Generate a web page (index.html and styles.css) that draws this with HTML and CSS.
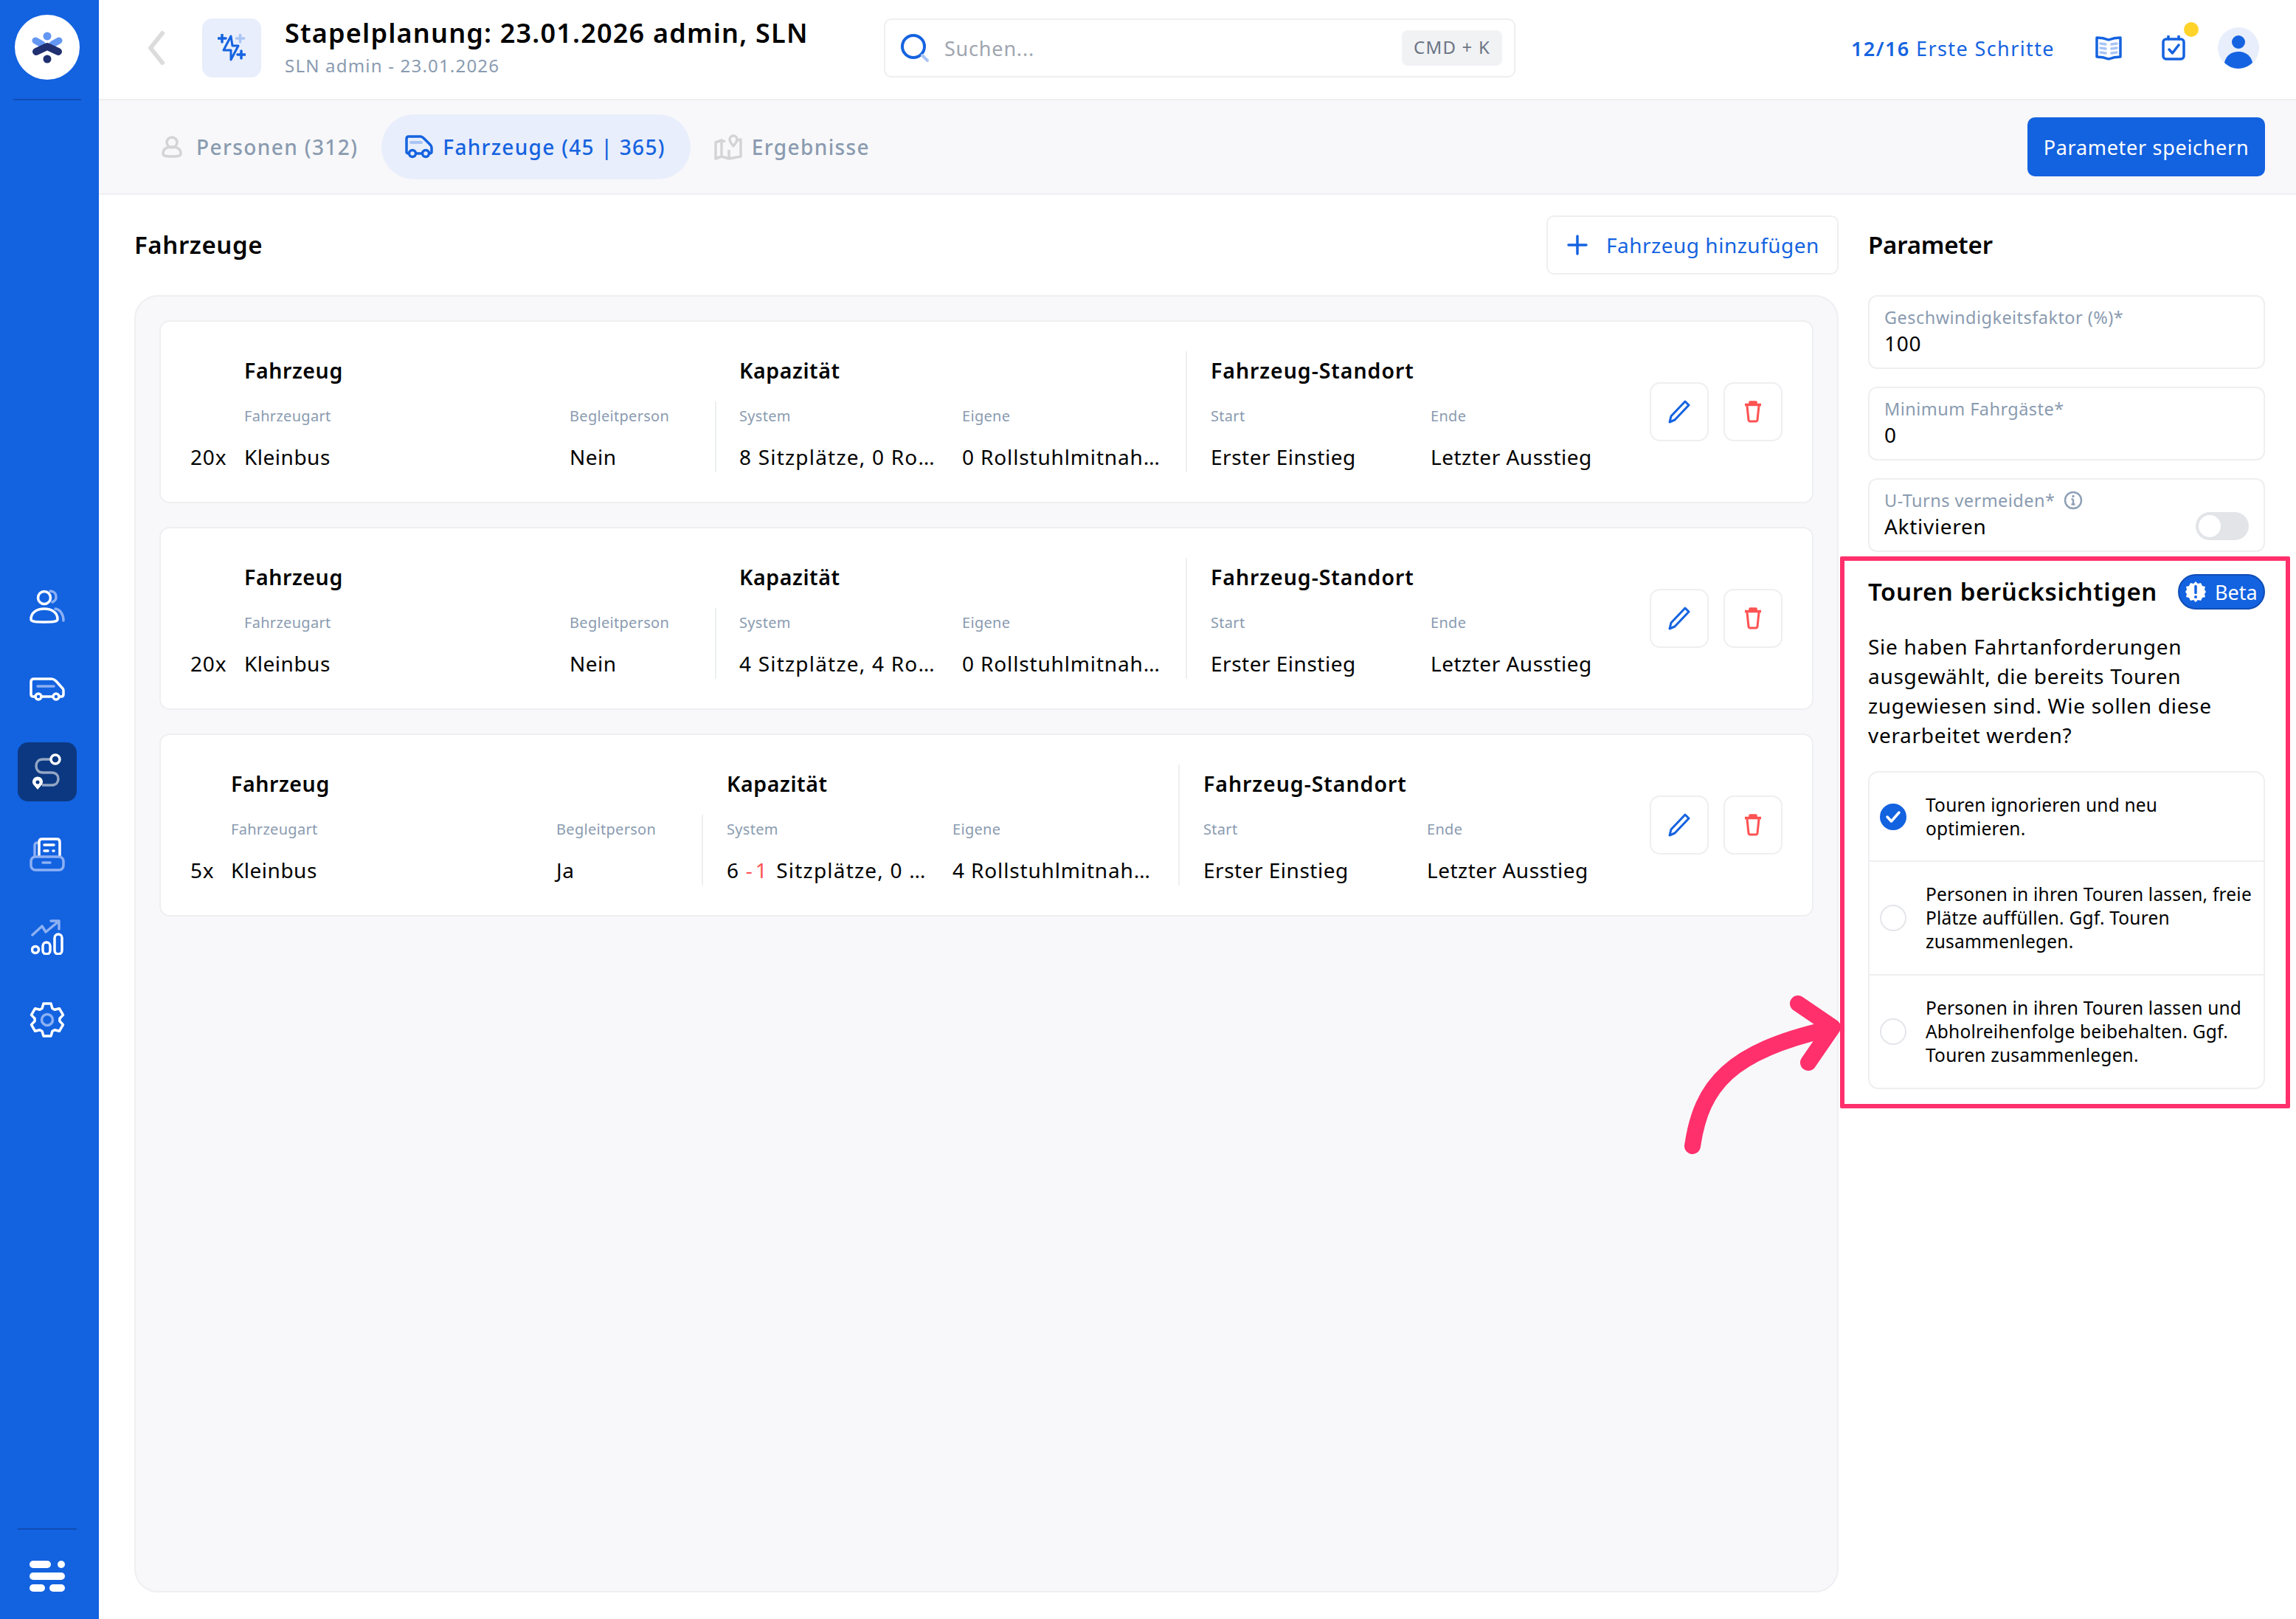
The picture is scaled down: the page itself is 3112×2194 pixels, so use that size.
FILE: index.html
```html
<!DOCTYPE html>
<html lang="de">
<head>
<meta charset="utf-8">
<title>Stapelplanung</title>
<link rel="stylesheet" href="styles.css">
</head>
<body>
<div class="app">
  <aside class="sidebar">
    <div class="logo">
      <svg width="88" height="88" viewBox="0 0 88 88" fill="none" stroke-linecap="round" stroke-linejoin="round"><circle cx="44" cy="44" r="44" fill="#fff"/><circle cx="44" cy="29" r="5.500" fill="#6497f2"/><path d="M28 35l9 5M60 35l-9 5" stroke="#6497f2" stroke-width="9"/><path d="M29 50l15-7 15 7" stroke="#203070" stroke-width="10"/><circle cx="44" cy="60" r="5.500" fill="#203070"/></svg>
    </div>
    <div class="side-rule"></div>
    <nav class="side-nav">
      <a class="side-item"><svg width="48" height="46" viewBox="0 0 48 46" fill="none" stroke="#fff" stroke-width="3.500" stroke-linecap="round"><circle cx="20" cy="11" r="8.500"/><path d="M2 40c0-9 8-14 18-14s18 5 18 14c0 3-3 4-18 4S2 43 2 40z"/><path d="M28 2c5 0 8 3.500 8 8s-2 5-5 7M35 26c7 1 11 8 11 16" stroke="#8cb0f2"/></svg></a>
      <a class="side-item"><svg width="48" height="32" viewBox="0 0 48 32" fill="none" stroke="#fff" stroke-width="3.500"><path d="M8 26H5c-2 0-3-1-3-3V6c0-3 2-4 4-4h24c2 0 4 1 6 3l9 10c1 1 1 2 1 3v5c0 2-1 3-3 3h-4M17 26h14"/><circle cx="12" cy="26" r="4"/><circle cx="36" cy="26" r="4"/><path d="M11 12h22" stroke="#8cb0f2" stroke-linecap="round"/></svg></a>
      <a class="side-item side-active"><svg width="40" height="50" viewBox="0 0 40 50" fill="none" stroke-width="3.500"><path d="M25 8H14C8 8 5 12 5 17s3 9 9 9h12c6 0 9 4 9 8.500S32 43 26 43H13" stroke="#93a6c4"/><circle cx="31" cy="8" r="6" stroke="#fff" fill="#0b3880"/><path d="M7 49l-6-7a7 7 0 1 1 12 0z" fill="#fff"/><circle cx="7" cy="39" r="2.500" fill="#0b3880"/></svg></a>
      <a class="side-item"><svg width="48" height="46" viewBox="0 0 48 46" fill="none" stroke-width="3.500" stroke-linecap="round"><path d="M7 24V11c0-2 1-4 4-4" stroke="#8cb0f2"/><path d="M13 25V6c0-3 2-4 4-4h20c2 0 4 1 4 4v19" stroke="#fff"/><rect x="2" y="26" width="44" height="18" rx="6" stroke="#8cb0f2"/><path d="M20 10h13M20 18h5M32 18h1" stroke="#fff"/><path d="M18 34h10" stroke="#8cb0f2"/></svg></a>
      <a class="side-item"><svg width="44" height="48" viewBox="0 0 44 48" fill="none" stroke-width="3.500" stroke-linecap="round" stroke-linejoin="round"><path d="M2 21L15 9l5 8L37 3M27 2h11v11" stroke="#8cb0f2"/><circle cx="6" cy="41" r="4.500" stroke="#fff"/><rect x="16" y="31" width="10" height="16" rx="5" stroke="#fff"/><rect x="32" y="20" width="10" height="27" rx="5" stroke="#fff"/></svg></a>
      <a class="side-item"><svg width="48" height="48" viewBox="0 0 48 48" fill="none" stroke-width="3.500" stroke-linejoin="round"><path d="M17.100 8.500L18.900 2.100H29.100L30.900 8.500L34 10.200L40.400 8.700L45.500 17.400L40.900 22.200V25.800L45.500 30.600L40.400 39.300L34 37.800L30.900 39.500L29.100 45.900H18.900L17.100 39.500L14 37.800L7.600 39.300L2.500 30.600L7.100 25.800V22.200L2.500 17.400L7.600 8.700L14 10.200z" stroke="#fff"/><circle cx="24" cy="24" r="7.500" stroke="#8cb0f2"/></svg></a>
    </nav>
    <div class="side-foot">
      <div class="side-rule side-rule-foot"></div>
      <svg width="48" height="42" viewBox="0 0 48 42" fill="#fff"><rect x="0" y="0" width="29" height="10" rx="5"/><circle cx="43" cy="5" r="5"/><rect x="0" y="16" width="48" height="10" rx="5"/><rect x="0" y="32" width="21" height="10" rx="5"/><rect x="27" y="32" width="21" height="10" rx="5"/></svg>
    </div>
  </aside>
  <main class="main">
    <header class="topbar">
      <svg class="back" width="24" height="48" viewBox="0 0 24 48" fill="none" stroke="#dcdcdc" stroke-width="6" stroke-linecap="round" stroke-linejoin="round"><path d="M20 4L4 24l16 20"/></svg>
      <div class="title-icon">
        <svg width="38" height="38" viewBox="0 0 38 38" fill="none" stroke-linecap="round"><path d="M18 3L8 22h10v13l10-19h-8z" stroke="#1563e0" stroke-width="3" stroke-linejoin="round"/><path d="M1 6h10M6 1v10M27 28h10M32 23v10" stroke="#1563e0" stroke-width="3.500"/><path d="M25.500 6h10M30.500 1v10" stroke="#a9c5f5" stroke-width="3.500"/></svg>
      </div>
      <div class="title-block">
        <h1 class="title">Stapelplanung: 23.01.2026 admin, SLN</h1>
        <div class="subtitle">SLN admin - 23.01.2026</div>
      </div>
      <div class="search">
        <svg width="44" height="44" viewBox="0 0 44 44" fill="none" stroke-width="4" stroke-linecap="round"><circle cx="20" cy="20" r="15" stroke="#1563e0"/><path d="M32 32l7 7" stroke="#a9c5f5"/></svg>
        <span class="search-text">Suchen...</span>
        <span class="kbd">CMD + K</span>
      </div>
      <div class="top-right">
        <a class="steps"><b>12/16</b> Erste Schritte</a>
        <svg width="36" height="34" viewBox="0 0 36 34" fill="none" stroke="#1563e0" stroke-width="3.500" stroke-linejoin="round"><path d="M2 3c6 0 11 1 16 3 5-2 10-3 16-3v26c-6 0-11 1-16 3-5-2-10-3-16-3z"/><path d="M7 11l7 1M7 17l7 1M7 23l7 1M29 11l-7 1M29 17l-7 1M29 23l-7 1" stroke="#a9c5f5" stroke-linecap="round"/></svg>
        <span class="cal">
          <svg width="32" height="34" viewBox="0 0 32 34" fill="none" stroke="#1563e0" stroke-width="3.500" stroke-linecap="round" stroke-linejoin="round"><rect x="2" y="5" width="28" height="27" rx="4"/><path d="M9 1v4M23 1v4M10 19l4.500 5L23 13"/></svg>
          <i class="dot"></i>
        </span>
        <span class="avatar"><svg width="56" height="56" viewBox="0 0 56 56"><circle cx="28" cy="28" r="28" fill="#e8eefb"/><circle cx="28" cy="20" r="9" fill="#1563e0"/><path d="M9 48c2-10 10-15 19-15s17 5 19 15c-5 5-12 8-19 8S14 53 9 48z" fill="#1563e0"/></svg></span>
      </div>
    </header>
    <div class="tabbar">
      <a class="tab tab-first"><svg width="30" height="30" viewBox="0 0 30 30" fill="none" stroke="#d4d4d4" stroke-width="3.500"><circle cx="15" cy="9" r="7"/><path d="M3 24c0-6 5-9 12-9s12 3 12 9c0 3-2 4-12 4S3 27 3 24z"/></svg><span>Personen (312)</span></a>
      <a class="tab tab-active"><svg width="38" height="32" viewBox="0 0 38 32" fill="none" stroke="#1563e0" stroke-width="3.500"><path d="M6 25H4c-1 0-2-1-2-2V5c0-2 1-3 3-3h16c2 0 3 1 5 3l8 8c1 1 2 2 2 4v6c0 1-1 2-2 2h-2M14 25h10"/><circle cx="10" cy="25" r="4.500"/><circle cx="28" cy="25" r="4.500"/><path d="M8 10h14" stroke="#a9c5f5" stroke-linecap="round" stroke-width="4"/></svg><span>Fahrzeuge (45 | 365)</span></a>
      <a class="tab tab-last"><svg width="38" height="36" viewBox="0 0 38 36" fill="none" stroke="#d4d4d4" stroke-width="3.500" stroke-linejoin="round"><path d="M2 12l8-3v22l-8 3zM10 9l5 2M10 31l10 3 16-3V8l-4 1M20 34V22"/><path d="M26 3a5 5 0 0 1 5 5c0 3-5 9-5 9s-5-6-5-9a5 5 0 0 1 5-5z"/></svg><span>Ergebnisse</span></a>
      <button class="save">Parameter speichern</button>
    </div>
    <div class="content">
      <section class="left">
        <div class="section-head">
          <h2 class="h2">Fahrzeuge</h2>
          <button class="add"><svg width="28" height="28" viewBox="0 0 28 28" stroke="#1563e0" stroke-width="3.500" stroke-linecap="round"><path d="M14 2v24M2 14h24"/></svg><span>Fahrzeug hinzufügen</span></button>
        </div>
        <div class="panel">
          <article class="card">
            <div class="count">20x</div>
            <div class="col col-vehicle">
              <h3 class="col-title">Fahrzeug</h3>
              <div class="pair">
                <div class="cell c-art"><div class="lbl">Fahrzeugart</div><div class="val">Kleinbus</div></div>
                <div class="cell"><div class="lbl">Begleitperson</div><div class="val">Nein</div></div>
              </div>
            </div>
            <div class="col col-cap">
              <h3 class="col-title">Kapazität</h3>
              <div class="pair">
                <div class="cell c-sys"><div class="lbl">System</div><div class="val">8 Sitzplätze, 0 Ro…</div></div>
                <div class="cell c-own"><div class="lbl">Eigene</div><div class="val">0 Rollstuhlmitnah…</div></div>
              </div>
            </div>
            <div class="col col-loc">
              <h3 class="col-title">Fahrzeug-Standort</h3>
              <div class="pair">
                <div class="cell c-start"><div class="lbl">Start</div><div class="val">Erster Einstieg</div></div>
                <div class="cell"><div class="lbl">Ende</div><div class="val">Letzter Ausstieg</div></div>
              </div>
            </div>
            <div class="actions">
              <button class="icon-btn"><svg width="30" height="32" viewBox="0 0 30 32" fill="none" stroke="#1563e0" stroke-width="3" stroke-linejoin="round"><path d="M23 2l5 5L9 27l-7 3 2-8z"/></svg></button>
              <button class="icon-btn"><svg width="24" height="30" viewBox="0 0 24 30" fill="none" stroke="#ff5252" stroke-width="3" stroke-linejoin="round"><path d="M4 7l2 19c0 1 1 2 2 2h8c1 0 2-1 2-2l2-19"/><path d="M1 5.500h22M8 5V2h8v3" stroke-width="3.500"/></svg></button>
            </div>
          </article>
          <article class="card">
            <div class="count">20x</div>
            <div class="col col-vehicle">
              <h3 class="col-title">Fahrzeug</h3>
              <div class="pair">
                <div class="cell c-art"><div class="lbl">Fahrzeugart</div><div class="val">Kleinbus</div></div>
                <div class="cell"><div class="lbl">Begleitperson</div><div class="val">Nein</div></div>
              </div>
            </div>
            <div class="col col-cap">
              <h3 class="col-title">Kapazität</h3>
              <div class="pair">
                <div class="cell c-sys"><div class="lbl">System</div><div class="val">4 Sitzplätze, 4 Ro…</div></div>
                <div class="cell c-own"><div class="lbl">Eigene</div><div class="val">0 Rollstuhlmitnah…</div></div>
              </div>
            </div>
            <div class="col col-loc">
              <h3 class="col-title">Fahrzeug-Standort</h3>
              <div class="pair">
                <div class="cell c-start"><div class="lbl">Start</div><div class="val">Erster Einstieg</div></div>
                <div class="cell"><div class="lbl">Ende</div><div class="val">Letzter Ausstieg</div></div>
              </div>
            </div>
            <div class="actions">
              <button class="icon-btn"><svg width="30" height="32" viewBox="0 0 30 32" fill="none" stroke="#1563e0" stroke-width="3" stroke-linejoin="round"><path d="M23 2l5 5L9 27l-7 3 2-8z"/></svg></button>
              <button class="icon-btn"><svg width="24" height="30" viewBox="0 0 24 30" fill="none" stroke="#ff5252" stroke-width="3" stroke-linejoin="round"><path d="M4 7l2 19c0 1 1 2 2 2h8c1 0 2-1 2-2l2-19"/><path d="M1 5.500h22M8 5V2h8v3" stroke-width="3.500"/></svg></button>
            </div>
          </article>
          <article class="card card-alt">
            <div class="count">5x</div>
            <div class="col col-vehicle">
              <h3 class="col-title">Fahrzeug</h3>
              <div class="pair">
                <div class="cell c-art"><div class="lbl">Fahrzeugart</div><div class="val">Kleinbus</div></div>
                <div class="cell"><div class="lbl">Begleitperson</div><div class="val">Ja</div></div>
              </div>
            </div>
            <div class="col col-cap">
              <h3 class="col-title">Kapazität</h3>
              <div class="pair">
                <div class="cell c-sys"><div class="lbl">System</div><div class="val">6 <span class="minus">-1</span> Sitzplätze, 0 …</div></div>
                <div class="cell c-own"><div class="lbl">Eigene</div><div class="val">4 Rollstuhlmitnah…</div></div>
              </div>
            </div>
            <div class="col col-loc">
              <h3 class="col-title">Fahrzeug-Standort</h3>
              <div class="pair">
                <div class="cell c-start"><div class="lbl">Start</div><div class="val">Erster Einstieg</div></div>
                <div class="cell"><div class="lbl">Ende</div><div class="val">Letzter Ausstieg</div></div>
              </div>
            </div>
            <div class="actions">
              <button class="icon-btn"><svg width="30" height="32" viewBox="0 0 30 32" fill="none" stroke="#1563e0" stroke-width="3" stroke-linejoin="round"><path d="M23 2l5 5L9 27l-7 3 2-8z"/></svg></button>
              <button class="icon-btn"><svg width="24" height="30" viewBox="0 0 24 30" fill="none" stroke="#ff5252" stroke-width="3" stroke-linejoin="round"><path d="M4 7l2 19c0 1 1 2 2 2h8c1 0 2-1 2-2l2-19"/><path d="M1 5.500h22M8 5V2h8v3" stroke-width="3.500"/></svg></button>
            </div>
          </article>
        </div>
      </section>
      <section class="right">
        <div class="param-head"><h2 class="h2 h2-param">Parameter</h2></div>
        <div class="field"><div class="f-lbl">Geschwindigkeitsfaktor (%)*</div><div class="f-val">100</div></div>
        <div class="field"><div class="f-lbl">Minimum Fahrgäste*</div><div class="f-val">0</div></div>
        <div class="field field-toggle">
          <div>
            <div class="f-lbl f-lbl-info">U-Turns vermeiden*<svg width="26" height="26" viewBox="0 0 26 26" fill="none"><circle cx="13" cy="13" r="11" stroke="#8ea0b6" stroke-width="2.500"/><path d="M13 11.500v7M10.500 11.500H13M10.500 18.500h5" stroke="#8ea0b6" stroke-width="2.500"/><circle cx="13" cy="7.500" r="1.700" fill="#8ea0b6"/></svg></div>
            <div class="f-val">Aktivieren</div>
          </div>
          <span class="toggle"><i></i></span>
        </div>
        <div class="tours">
          <div class="tours-head">
            <h2 class="h2">Touren berücksichtigen</h2>
            <span class="beta"><svg width="28" height="28" viewBox="0 0 28 28"><path d="M14 0l3 3 4-1 2 4 4 1-1 4 2 3-2 3 1 4-4 1-2 4-4-1-3 3-3-3-4 1-2-4-4-1 1-4-2-3 2-3-1-4 4-1 2-4 4 1z" fill="#fff"/><path d="M14 6.500v9" stroke="#1563e0" stroke-width="3.500" stroke-linecap="round"/><circle cx="14" cy="21" r="2" fill="#1563e0"/></svg>Beta</span>
          </div>
          <p class="tours-text">Sie haben Fahrtanforderungen ausgewählt, die bereits Touren zugewiesen sind. Wie sollen diese verarbeitet werden?</p>
          <div class="options">
            <label class="opt opt-1"><span class="radio radio-on"><svg width="22" height="18" viewBox="0 0 22 18" fill="none" stroke="#fff" stroke-width="3.500" stroke-linecap="round" stroke-linejoin="round"><path d="M3 9l5.500 6L19 3"/></svg></span><span>Touren ignorieren und neu optimieren.</span></label>
            <label class="opt"><span class="radio"></span><span>Personen in ihren Touren lassen, freie Plätze auffüllen. Ggf. Touren zusammenlegen.</span></label>
            <label class="opt"><span class="radio"></span><span>Personen in ihren Touren lassen und Abholreihenfolge beibehalten. Ggf. Touren zusammenlegen.</span></label>
          </div>
        </div>
      </section>
    </div>
  </main>
</div>
<div class="callout"></div>
<svg class="arrow" width="226" height="224" viewBox="0 0 226 224" fill="none" stroke="#ff306c" stroke-width="22" stroke-linecap="round" stroke-linejoin="round"><path d="M18 213C30 130 70 85 200 55M161 20l47 32-33 48"/></svg>
</body>
</html>
```
FILE: styles.css
```css
* { box-sizing: border-box; }
html, body { margin: 0; padding: 0; }
body { width: 3112px; height: 2194px; overflow: hidden; position: relative; background: #fff; font-family: "Noto Sans", "Liberation Sans", sans-serif; color: #000; }
h1, h2, h3, p { margin: 0; }
button { font-family: inherit; cursor: pointer; }
.app { display: flex; width: 3112px; height: 2194px; }

.sidebar { width: 134px; flex: none; background: #1362e0; display: flex; flex-direction: column; align-items: center; padding: 20px 6px 0 0; }
.logo { height: 88px; line-height: 0; }
.side-rule { width: 92px; height: 2px; background: #0f4db5; margin-top: 26px; }
.side-nav { display: flex; flex-direction: column; align-items: center; margin-top: 646px; gap: 32px; }
.side-item { width: 80px; height: 80px; display: flex; align-items: center; justify-content: center; border-radius: 14px; }
.side-active { background: #0b3880; }
.side-foot { margin-top: auto; width: 100%; display: flex; flex-direction: column; align-items: center; padding-bottom: 37px; }
.side-rule-foot { width: 80px; margin: 0 0 42px; }

.main { flex: 1; min-width: 0; display: flex; flex-direction: column; }
.topbar { height: 136px; flex: none; border-bottom: 2px solid #eeeff1; display: flex; align-items: center; padding-left: 66px; position: relative; }
.back { flex: none; margin-top: -4px; }
.title-icon { width: 80px; height: 80px; margin-left: 50px; margin-top: -4px; background: #e8eefb; border-radius: 14px; display: flex; align-items: center; justify-content: center; flex: none; }
.title-block { margin-left: 32px; width: 812px; flex: none; margin-top: -8px; }
.title { font-size: 36px; font-weight: 600; line-height: 46px; letter-spacing: 1.2px; white-space: nowrap; }
.subtitle { font-size: 24px; line-height: 30px; color: #8a9bb0; letter-spacing: 1.2px; margin-top: 6px; }
.search { width: 856px; height: 80px; margin-top: -4px; border: 2px solid #eeeff1; border-radius: 10px; display: flex; align-items: center; padding: 0 16px 0 18px; flex: none; }
.search-text { font-size: 27px; color: #a0a6b0; margin-left: 18px; letter-spacing: 0.8px; flex: 1; }
.kbd { background: #f1f2f4; border-radius: 8px; height: 48px; line-height: 46px; font-size: 24px; color: #6b7585; padding: 0 16px; letter-spacing: 1.2px; }
.top-right { margin-left: auto; display: flex; align-items: center; padding-right: 50px; margin-top: -4px; }
.steps { font-size: 27px; color: #1563e0; letter-spacing: 1.4px; margin-right: 55px; white-space: nowrap; }
.steps b { font-weight: 600; }
.cal { position: relative; margin-left: 54px; line-height: 0; }
.dot { position: absolute; top: -18px; left: 30px; width: 20px; height: 20px; background: #ffd32a; border-radius: 50%; }
.avatar { margin-left: 44px; line-height: 0; }

.tabbar { height: 128px; flex: none; background: #f8f8fa; border-bottom: 2px solid #eeeff1; display: flex; align-items: center; padding: 0 42px 0 64px; }
.tab { height: 88px; display: flex; align-items: center; gap: 13px; font-size: 28px; font-weight: 500; color: #8a9bb0; letter-spacing: 1.4px; padding: 0 34px 0 32px; border-radius: 44px; white-space: nowrap; }
.tab-first { padding: 0 32px 0 20px; gap: 18px; }
.tab-active { background: #e8eefb; color: #1563e0; letter-spacing: 1.3px; }
.save { margin-left: auto; width: 322px; height: 80px; background: #1362e0; color: #fff; border: 0; border-radius: 10px; font-size: 27px; letter-spacing: 0.7px; }

.content { flex: 1; display: flex; min-height: 0; padding: 0 42px 0 48px; }
.left { width: 2310px; flex: none; }
.section-head { height: 136px; display: flex; align-items: center; justify-content: space-between; }
.h2 { font-size: 33px; font-weight: 600; letter-spacing: 0.6px; line-height: 44px; white-space: nowrap; }
.h2-param { letter-spacing: -0.2px; }
.add { width: 396px; height: 80px; background: #fff; border: 2px solid #eeeff1; border-radius: 10px; display: flex; align-items: center; padding: 0 0 0 26px; gap: 25px; font-size: 28px; color: #1563e0; letter-spacing: 0.5px; white-space: nowrap; }
.panel { height: 1758px; background: #f8f8fa; border: 2px solid #eeeff1; border-radius: 32px; padding: 32px; display: flex; flex-direction: column; gap: 32px; }
.card { position: relative; height: 248px; flex: none; background: #fff; border: 2px solid #eeeff1; border-radius: 14px; display: flex; padding-top: 46px; padding-left: 40px; }
.count { position: absolute; left: 40px; top: 163px; font-size: 28px; line-height: 40px; letter-spacing: 0.8px; white-space: nowrap; }
.col { display: flex; flex-direction: column; position: relative; }
.col-vehicle { width: 711px; padding-left: 73px; }
.col-cap { width: 638px; padding-left: 33px; }
.col-loc { width: 590px; padding-left: 34px; }
.col-title { font-size: 28.500px; font-weight: 600; letter-spacing: 0.6px; line-height: 40px; height: 40px; white-space: nowrap; }
.col-loc .col-title { letter-spacing: 0.95px; }
.pair { display: flex; margin-top: 28px; }
.cell { flex: none; min-width: 0; }
.c-art { width: 441px; }
.c-sys { width: 302px; }
.c-own { width: 274px; }
.c-start { width: 298px; }
.lbl { font-size: 20px; color: #8a9bb0; line-height: 28px; letter-spacing: 0.3px; white-space: nowrap; }
.val { font-size: 28px; line-height: 40px; margin-top: 21px; letter-spacing: 0.5px; white-space: nowrap; }
.c-sys .val { letter-spacing: 1.2px; }
.c-own .val { letter-spacing: 0.85px; }
.minus { color: #ff5252; letter-spacing: 4px; }
.col-cap::before, .col-loc::before { content: ""; position: absolute; left: 0; width: 2px; background: #eeeff1; }
.col-cap::before { top: 62px; height: 96px; }
.col-loc::before { top: -6px; height: 164px; }
.actions { position: absolute; right: 40px; top: 82px; display: flex; gap: 20px; }
.icon-btn { width: 80px; height: 80px; background: #fff; border: 2px solid #eeeff1; border-radius: 14px; display: flex; align-items: center; justify-content: center; padding: 0; }
.card-alt .col-vehicle { width: 693px; padding-left: 55px; }
.card-alt .col-cap { width: 646px; padding-left: 34px; }
.card-alt .c-sys { width: 306px; }
.card-alt .c-own { width: 276px; }
.card-alt .c-start { width: 303px; }
.card-alt .col-loc { width: 600px; }

.right { flex: 1; padding-left: 40px; min-width: 0; }
.param-head { height: 136px; display: flex; align-items: center; }
.field { height: 100px; margin: 0 0 24px; border: 2px solid #eeeff1; border-radius: 12px; padding: 13px 20px; background: #fff; }
.f-lbl { font-size: 23.500px; line-height: 30px; color: #8a9bb0; letter-spacing: 0.45px; white-space: nowrap; }
.f-val { font-size: 28px; line-height: 38px; letter-spacing: 0.7px; margin-top: 1px; }
.field-toggle { display: flex; justify-content: space-between; align-items: flex-start; margin-bottom: 0; }
.f-lbl-info { display: flex; align-items: center; gap: 12px; }
.toggle { width: 72px; height: 38px; border-radius: 19px; background: #e2e4e8; margin-top: 31px; padding: 4px; display: block; }
.toggle i { display: block; width: 30px; height: 30px; border-radius: 50%; background: #fff; }

.tours { position: relative; padding-top: 30px; }
.tours-head { display: flex; justify-content: space-between; align-items: center; height: 48px; }
.beta { display: inline-flex; align-items: center; gap: 12px; width: 118px; height: 48px; background: #1362e0; border: 2px solid #0f4db5; color: #fff; border-radius: 24px; font-size: 27px; padding-left: 8px; }
.tours-text { font-size: 28px; line-height: 40px; letter-spacing: 0.7px; margin-top: 30px; }
.options { margin-top: 29px; border: 2px solid #eeeff1; border-radius: 14px; }
.opt { display: flex; align-items: center; gap: 26px; padding: 28px 8px 28px 14px; font-size: 24.500px; line-height: 32px; letter-spacing: 0.2px; }
.opt + .opt { border-top: 2px solid #eeeff1; }
.opt-1 { height: 119px; padding-top: 0; padding-bottom: 0; }
.radio { width: 36px; height: 36px; flex: none; border-radius: 50%; border: 2px solid #e4e6ea; display: flex; align-items: center; justify-content: center; background: #fff; }
.radio-on { background: #1362e0; border-color: #1362e0; }

.callout { position: absolute; left: 2494px; top: 754px; width: 610px; height: 748px; border: 6px solid #ff306c; border-radius: 2px; pointer-events: none; }
.arrow { position: absolute; left: 2276px; top: 1340px; }
```
